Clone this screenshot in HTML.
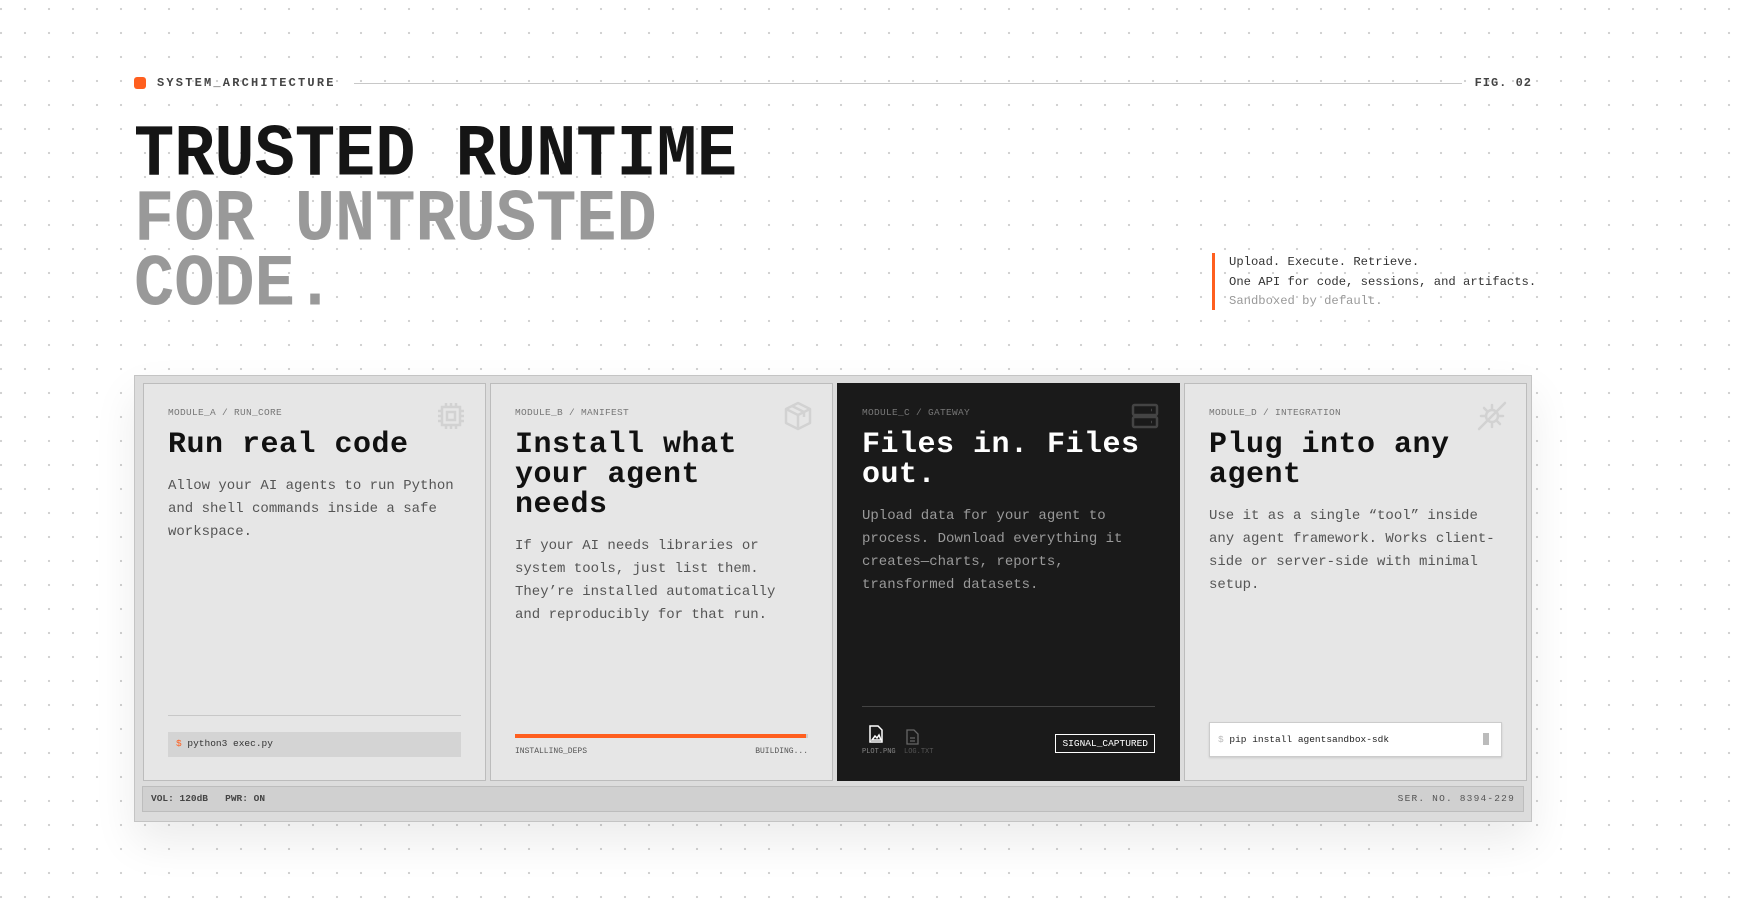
<!DOCTYPE html>
<html><head><meta charset="utf-8"><style>
*{margin:0;padding:0;box-sizing:border-box}
body{width:1743px;height:909px;overflow:hidden;background:#fff;font-family:"Liberation Mono",monospace;position:relative;
background-image:radial-gradient(circle,#cfcfcf 1px,transparent 1.3px);background-size:24px 24px;background-position:-11px -3px}
.abs{position:absolute}
.hdr{top:76px;left:134px;height:14px;width:1398px}
.dot{position:absolute;left:0;top:1px;width:12px;height:12px;background:#ff5f1f;border-radius:3px}
.lab{position:absolute;left:23px;top:0;font-size:12px;font-weight:bold;letter-spacing:2.2px;color:#444}
.rule{position:absolute;left:220px;right:70px;top:7px;height:1px;background:#c8c8c8}
.fig{position:absolute;right:0;top:0;font-size:12px;font-weight:bold;letter-spacing:1px;color:#444}
.title{left:134px;top:124px;font-weight:bold;font-size:67px;line-height:59px;letter-spacing:0px;transform:scaleY(1.1);transform-origin:0 0;color:#151515}
.title .g{color:#999}
.tag{left:1212px;top:253px;border-left:3px solid #ff5f1f;padding-left:14px;font-size:12.2px;line-height:19.5px;color:#333;height:57px}
.box{left:134px;top:375px;width:1398px;height:447px;background:#dcdcdc;border:1px solid #c4c4c4;box-shadow:0 20px 40px rgba(0,0,0,.08)}
.card{position:absolute;top:7px;width:343px;height:398px;background:#e6e6e6;border:1px solid #bcbcbc;padding:23px 30px 0 24px}
.card.dark{background:#1a1a1a;border-color:#1a1a1a}
.mod{font-size:9.5px;color:#777;letter-spacing:.3px}
h2{font-size:30px;line-height:30px;margin-top:12px;font-weight:bold;color:#111;letter-spacing:.5px}
.dark h2{color:#fff}
p{font-size:14px;line-height:23px;color:#555;margin-top:15px}
.dark p{color:#9a9a9a}
.ic{position:absolute;right:18px;top:16px;width:32px;height:32px}
.foot{position:absolute;left:7px;top:410px;width:1382px;height:26px;background:#d0d0d0;border:1px solid #bdbdbd;font-size:9.5px;font-weight:bold;color:#444;padding:6px 8px}
</style></head><body>
<div class="abs hdr"><div class="dot"></div><div class="lab">SYSTEM_ARCHITECTURE</div><div class="rule"></div><div class="fig">FIG. 02</div></div>
<div class="abs title">TRUSTED RUNTIME<br><span class="g">FOR UNTRUSTED<br>CODE.</span></div>
<div class="abs tag">Upload. Execute. Retrieve.<br>One API for code, sessions, and artifacts.<br><span style="color:#999">Sandboxed by default.</span></div>
<div class="abs box">
 <div class="card" style="left:8px">
  <svg class="ic" viewBox="0 0 32 32" fill="none" stroke="#d2d2d2" stroke-width="2.5"><rect x="7" y="7" width="18" height="18"/><rect x="12" y="12" width="8" height="8"/><path d="M11 3v4M16 3v4M21 3v4M11 25v4M16 25v4M21 25v4M3 11h4M3 16h4M3 21h4M25 11h4M25 16h4M25 21h4"/></svg>
  <div class="mod">MODULE_A / RUN_CORE</div>
  <h2>Run real code</h2>
  <p>Allow your AI agents to run Python and shell commands inside a safe workspace.</p>
  <div style="position:absolute;left:24px;right:24px;top:331px;height:1px;background:#c8c8c8"></div>
  <div style="position:absolute;left:24px;right:24px;top:348px;height:25px;background:#d4d4d4;font-size:9.5px;color:#333;padding:6px 8px"><span style="color:#ff5f1f">$</span> python3 exec.py</div>
 </div>
 <div class="card" style="left:355px">
  <svg class="ic" viewBox="0 0 32 32" fill="none" stroke="#d2d2d2" stroke-width="2.5" stroke-linejoin="round"><path d="M16 3l12 6v14l-12 6-12-6V9z"/><path d="M4 9l12 6 12-6M16 15v14M10 6l12 6v5"/></svg>
  <div class="mod">MODULE_B / MANIFEST</div>
  <h2>Install what your agent needs</h2>
  <p>If your AI needs libraries or system tools, just list them. They’re installed automatically and reproducibly for that run.</p>
  <div style="position:absolute;left:24px;right:24px;top:350px;height:4px;background:#ff5f1f;border-right:2px solid #ccc"></div>
  <div style="position:absolute;left:24px;right:24px;top:363px;font-size:8px;color:#555;display:flex;justify-content:space-between"><span>INSTALLING_DEPS</span><span>BUILDING...</span></div>
 </div>
 <div class="card dark" style="left:702px">
  <svg class="ic" viewBox="0 0 32 32" fill="none" stroke="#444" stroke-width="2.5"><rect x="4" y="5" width="24" height="10" rx="1.5"/><rect x="4" y="17" width="24" height="10" rx="1.5"/><path d="M22 10h1M22 22h1"/></svg>
  <div class="mod">MODULE_C / GATEWAY</div>
  <h2>Files in. Files out.</h2>
  <p>Upload data for your agent to process. Download everything it creates—charts, reports, transformed datasets.</p>
  <div style="position:absolute;left:24px;right:24px;top:322px;height:1px;background:#444"></div>
  <svg style="position:absolute;left:31px;top:341px" width="14" height="18" viewBox="0 0 14 18" fill="none" stroke="#fff" stroke-width="1.5"><path d="M1 1h8l4 4v12H1z"/><path d="M3 15l3-4 2 2 2-3 2 5z"/></svg>
  <svg style="position:absolute;left:68px;top:345px" width="13" height="16" viewBox="0 0 13 16" fill="none" stroke="#666" stroke-width="1.3"><path d="M1 1h7l4 4v10H1z"/><path d="M4 9h5M4 12h5"/></svg>
  <div style="position:absolute;left:24px;top:364px;font-size:7px;color:#888">PLOT.PNG&nbsp; <span style="color:#555">LOG.TXT</span></div>
  <div style="position:absolute;right:24px;top:350px;border:1.5px solid #fff;color:#fff;font-size:9.5px;padding:3px 6px">SIGNAL_CAPTURED</div>
 </div>
 <div class="card" style="left:1049px">
  <svg class="ic" viewBox="0 0 32 32" fill="none" stroke="#d2d2d2" stroke-width="2.5" stroke-linecap="round"><path d="M3 29L29 3"/><circle cx="16" cy="16" r="6"/><path d="M16 5v4M16 23v4M5 16h4M23 16h4M8 8l3 3M21 21l3 3"/></svg>
  <div class="mod">MODULE_D / INTEGRATION</div>
  <h2>Plug into any agent</h2>
  <p>Use it as a single “tool” inside any agent framework. Works client-side or server-side with minimal setup.</p>
  <div style="position:absolute;left:24px;right:24px;top:338px;height:35px;background:#fff;border:1px solid #ccc;box-shadow:0 1px 2px rgba(0,0,0,.12);font-size:9.5px;color:#222;padding:11px 8px"><span style="color:#bbb">$</span> pip install agentsandbox-sdk<span style="position:absolute;right:12px;top:10px;width:6px;height:12px;background:#bbb"></span></div>
 </div>
 <div class="foot"><span>VOL: 120dB&nbsp;&nbsp;&nbsp;PWR: ON</span><span style="position:absolute;right:8px;top:6px;font-weight:normal;letter-spacing:1.2px;color:#555">SER. NO. 8394-229</span></div>
</div>
</body></html>
